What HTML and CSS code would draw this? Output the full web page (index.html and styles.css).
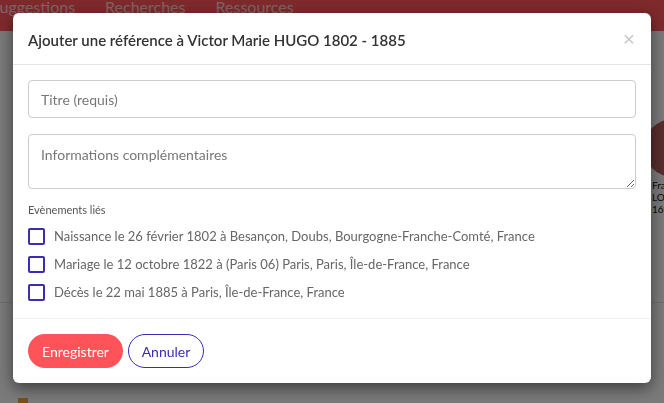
FILE: index.html
```html
<!DOCTYPE html>
<html>
<head>
    <title>Ajouter une référence</title>
    <link rel="stylesheet" href="styles.css">
</head>
<body>
    <div class="page">
        <nav class="navbar">
            <span class="nav-item nav-first">Suggestions</span>
            <span class="nav-item">Recherches</span>
            <span class="nav-item">Ressources</span>
        </nav>
        <div class="tree">
            <div class="tree-row">
                <div class="person">
                    <div class="avatar"></div>
                    <div class="person-name">François<br>LOUIS<br>1695</div>
                </div>
            </div>
            <div class="tree-line"></div>
            <div class="tree-bottom">
                <span class="tag"></span>
            </div>
        </div>
    </div>

    <div class="backdrop"></div>

    <div class="modal">
        <div class="modal-dialog">
            <div class="modal-header">
                <h5 class="modal-title">Ajouter une référence à Victor Marie HUGO 1802 - 1885</h5>
                <button class="close">&times;</button>
            </div>
            <div class="modal-body">
                <input type="text" class="form-control" placeholder="Titre (requis)">
                <textarea class="form-control info" placeholder="Informations complémentaires"></textarea>
                <div class="events-label">Evènements liés</div>
                <label class="event">
                    <span class="check"></span>
                    Naissance le 26 février 1802 à Besançon, Doubs, Bourgogne-Franche-Comté, France
                </label>
                <label class="event">
                    <span class="check"></span>
                    Mariage le 12 octobre 1822 à (Paris 06) Paris, Paris, Île-de-France, France
                </label>
                <label class="event">
                    <span class="check"></span>
                    Décès le 22 mai 1885 à Paris, Île-de-France, France
                </label>
            </div>
            <div class="modal-footer">
                <button class="btn btn-save">Enregistrer</button>
                <button class="btn btn-cancel">Annuler</button>
            </div>
        </div>
    </div>
</body>
</html>
```

FILE: styles.css
```css
body {
    margin: 0;
    font-family: Lato, "Open Sans", sans-serif;
    background-color: #f4f4f4;
    overflow: hidden;
}
.page {
    height: 403px;
    display: flex;
    flex-direction: column;
}
.navbar {
    height: 31px;
    background-color: #fc5459;
    display: flex;
    gap: 30px;
    overflow: hidden;
}
.nav-item {
    color: #ffc8c8;
    font-size: 16px;
    line-height: 16px;
    margin-top: -1px;
}
.nav-first {
    margin-left: -9px;
}
.tree {
    flex: 1;
    display: flex;
    flex-direction: column;
}
.tree-row {
    display: flex;
    justify-content: flex-end;
    padding-top: 88px;
    margin-right: -40px;
}
.person {
    width: 60px;
}
.avatar {
    width: 58px;
    height: 58px;
    border-radius: 50%;
    background-color: #b25a5a;
}
.person-name {
    font-size: 10px;
    line-height: 12px;
    color: #111;
    padding-top: 2px;
    margin-left: 8px;
}
.tree-line {
    margin-top: 87px;
    border-top: 1px solid #d8d8d8;
}
.tree-bottom {
    margin-top: auto;
    padding-left: 18px;
}
.tag {
    display: block;
    width: 10px;
    height: 5px;
    background-color: #f0a030;
}
.backdrop {
    position: fixed;
    top: 0;
    left: 0;
    width: 100%;
    height: 100%;
    background-color: rgba(0, 0, 0, 0.5);
}
.modal {
    position: fixed;
    top: 0;
    left: 0;
    width: 100%;
    height: 100%;
    padding: 13px;
    box-sizing: border-box;
}
.modal-dialog {
    width: 638px;
    background-color: #fff;
    border-radius: 6px;
    box-shadow: 0 5px 15px rgba(0, 0, 0, 0.5);
}
.modal-header {
    display: flex;
    align-items: center;
    justify-content: space-between;
    height: 51px;
    padding: 0 15px;
    border-bottom: 1px solid #e5e5e5;
}
.modal-title {
    margin: 0;
    font-size: 15px;
    font-weight: 600;
    color: #333;
    padding-top: 2px;
}
.close {
    border: none;
    background: none;
    font-family: Arial, sans-serif;
    font-size: 21px;
    color: #c8c8c8;
    padding: 0;
    margin-right: 1px;
    cursor: pointer;
}
.modal-body {
    padding: 15px 15px 12px;
}
.form-control {
    display: block;
    width: 100%;
    box-sizing: border-box;
    border: 1px solid #ccc;
    border-radius: 4px;
    font-family: Lato, sans-serif;
    font-size: 14px;
    color: #555;
    padding: 0 12px;
    margin: 0;
}
.form-control::placeholder {
    color: #777;
}
input.form-control {
    height: 38px;
}
.info {
    height: 55px;
    margin-top: 16px;
    padding-top: 11px;
    resize: vertical;
}
.events-label {
    font-size: 11px;
    color: #555;
    margin-top: 14px;
    margin-bottom: 6px;
}
.event {
    display: flex;
    align-items: center;
    gap: 9px;
    height: 28px;
    font-size: 13px;
    color: #666;
    cursor: pointer;
}
.check {
    width: 13px;
    height: 13px;
    border: 2px solid #3c2bb4;
    border-radius: 2px;
    flex-shrink: 0;
}
.modal-footer {
    border-top: 1px solid #f2f2f2;
    padding: 15px 15px 15px;
    display: flex;
    gap: 5px;
}
.btn {
    height: 34px;
    border-radius: 17px;
    font-family: Lato, sans-serif;
    font-size: 14px;
    padding: 0 12px;
    cursor: pointer;
}
.btn-save {
    background-color: #fd5359;
    color: #fff;
    border: none;
    width: 95px;
}
.btn-cancel {
    background-color: #fff;
    color: #3c2bb4;
    border: 1px solid #3c2bb4;
    width: 76px;
}
```
